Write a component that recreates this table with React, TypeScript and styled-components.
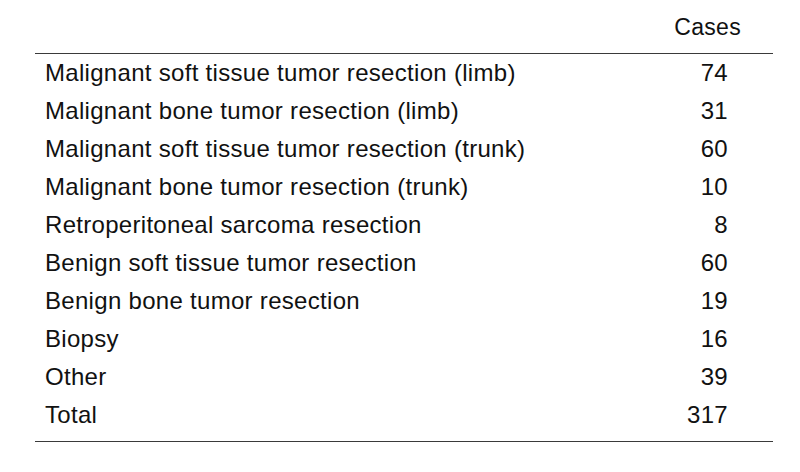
import React from "react";
import styled, { createGlobalStyle } from "styled-components";

const Global = createGlobalStyle`
  html, body { margin: 0; padding: 0; background: #ffffff; }
  body { font-family: "Liberation Sans", Arial, sans-serif; color: #111111; }
`;

const Page = styled.div`
  width: 800px;
  height: 472px;
  padding: 0 0 0 35px;
  box-sizing: border-box;
`;

const Table = styled.table`
  width: 738px;
  border-collapse: collapse;
  font-size: 24px;
  letter-spacing: 0.3px;
`;

const HeadRow = styled.tr`
  border-bottom: 1.5px solid #3a3a3a;
`;

const HeadCell = styled.th<{ $align?: "left" | "right" }>`
  height: 53px;
  padding: 12px 32px 0 10px;
  box-sizing: border-box;
  vertical-align: top;
  font-weight: normal;
  font-size: 23px;
  line-height: 30px;
  text-align: ${(p) => p.$align ?? "left"};
`;

const Body = styled.tbody`
  border-bottom: 1.5px solid #3a3a3a;
`;

const LabelCell = styled.td<{ $pt?: number; $pb?: number }>`
  padding: ${(p) => p.$pt ?? 0}px 0 ${(p) => p.$pb ?? 0}px 10px;
  line-height: 38px;
  white-space: nowrap;
`;

const NumCell = styled.td<{ $pt?: number; $pb?: number }>`
  padding: ${(p) => p.$pt ?? 0}px 45px ${(p) => p.$pb ?? 0}px 0;
  line-height: 38px;
  text-align: right;
`;

const rows: [string, number][] = [
  ["Malignant soft tissue tumor resection (limb)", 74],
  ["Malignant bone tumor resection (limb)", 31],
  ["Malignant soft tissue tumor resection (trunk)", 60],
  ["Malignant bone tumor resection (trunk)", 10],
  ["Retroperitoneal sarcoma resection", 8],
  ["Benign soft tissue tumor resection", 60],
  ["Benign bone tumor resection", 19],
  ["Biopsy", 16],
  ["Other", 39],
  ["Total", 317],
];

export default function App() {
  return (
    <>
      <Global />
      <Page>
        <Table>
          <thead>
            <HeadRow>
              <HeadCell />
              <HeadCell $align="right">Cases</HeadCell>
            </HeadRow>
          </thead>
          <Body>
            {rows.map(([label, n], i) => {
              const pb = i === rows.length - 1 ? 7 : 0;
              return (
                <tr key={label}>
                  <LabelCell $pb={pb}>{label}</LabelCell>
                  <NumCell $pb={pb}>{n}</NumCell>
                </tr>
              );
            })}
          </Body>
        </Table>
      </Page>
    </>
  );
}
